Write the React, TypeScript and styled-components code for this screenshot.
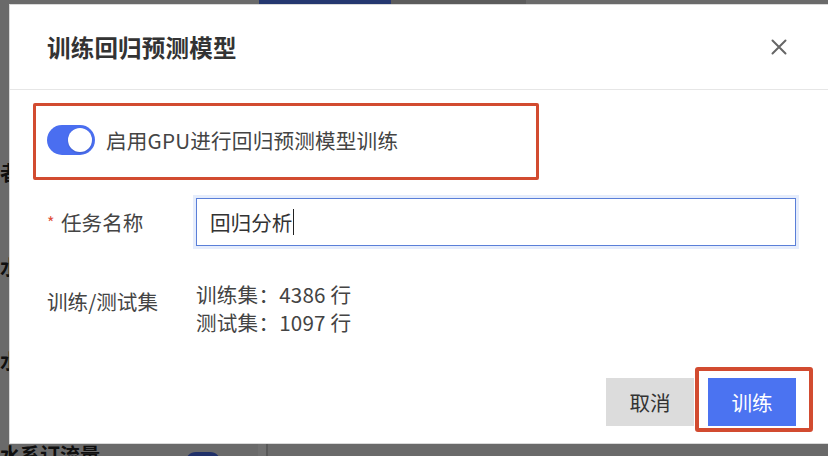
import React from 'react';
import styled, { createGlobalStyle } from 'styled-components';

const GlobalStyle = createGlobalStyle`
  html, body { margin: 0; padding: 0; width: 828px; height: 456px; overflow: hidden; }
  body { font-family: "Noto Sans CJK SC", "Noto Sans", sans-serif; }
  * { box-sizing: border-box; }
`;

const Screen = styled.div`
  position: relative;
  width: 828px;
  height: 456px;
  overflow: hidden;
  background: #f2f2f2;
`;

/* ---------- page behind the dialog ---------- */
const BgPage = styled.div`
  display: flex;
  flex-direction: column;
  width: 100%;
  height: 100%;
`;

const BgTabs = styled.div`
  display: flex;
  height: 4px;
  flex: none;
  padding-left: 259px;
`;

const BgTab = styled.div<{ $active?: boolean }>`
  width: ${(p) => (p.$active ? 132 : 135)}px;
  background: ${(p) => (p.$active ? '#5580ff' : '#d2d2d2')};
`;

const BgRows = styled.div`
  display: flex;
  flex-direction: column;
  padding-top: 119px;
`;

const BgRow = styled.div`
  display: flex;
  align-items: center;
  height: 94px;
  flex: none;
`;

const BgLabel = styled.span`
  width: 185px;
  flex: none;
  font-size: 20px;
  font-weight: 700;
  color: #222;
  white-space: nowrap;
  margin-top: 4px;
`;

const BgSwitch = styled.span`
  width: 36px;
  height: 22px;
  margin-top: 22px;
  border-radius: 11px;
  background: #4a6ef0;
  flex: none;
`;

const BgDivider = styled.span`
  width: 10px;
  height: 94px;
  margin-left: 37px;
  background: #ffffff;
  border-right: 2px solid #c8c8c8;
  flex: none;
`;

const BgValue = styled.span<{ $grow?: boolean }>`
  margin-left: 38px;
  margin-top: 24px;
  font-size: 18px;
  color: #222;
  flex: ${(p) => (p.$grow ? 1 : 'none')};
`;

const Mask = styled.div`
  position: absolute;
  inset: 0;
  background: rgba(0, 0, 0, 0.56);
`;

/* ---------- dialog ---------- */
const Dialog = styled.div`
  position: absolute;
  left: 9px;
  top: 4px;
  width: 826px;
  height: 440px;
  background: #fff;
  border: 1px solid #d9d9d9;
  display: flex;
  flex-direction: column;
`;

const Header = styled.div`
  height: 85px;
  flex: none;
  display: flex;
  align-items: center;
  justify-content: space-between;
  padding: 0 39px 0 37px;
  border-bottom: 1px solid #e6e6e6;
`;

const Title = styled.h2`
  margin: 0;
  font-size: 23.5px;
  font-weight: 700;
  color: #333;
  letter-spacing: 0.2px;
`;

const CloseButton = styled.button`
  width: 32px;
  height: 32px;
  padding: 0;
  border: none;
  background: transparent;
  display: flex;
  align-items: center;
  justify-content: center;
  cursor: pointer;
`;

const Body = styled.div`
  flex: 1;
  display: flex;
  flex-direction: column;
  padding: 0 38px 17px 37px;
`;

const SwitchRow = styled.div`
  position: relative;
  margin-top: 16px;
  height: 71px;
  display: flex;
  align-items: center;
  gap: 11px;
  padding-bottom: 4px;
`;

const Annotation = styled.div<{ $w: number }>`
  position: absolute;
  border: ${(p) => p.$w}px solid #d24b30;
  border-radius: 2px;
  pointer-events: none;
`;

const RowMark = styled(Annotation)`
  left: -14px;
  top: -3px;
  width: 506px;
  height: 77px;
`;

const Toggle = styled.span<{ $on: boolean }>`
  position: relative;
  width: 48px;
  height: 30px;
  border-radius: 15px;
  background: ${(p) => (p.$on ? '#4a6ef0' : '#c8c8c8')};
  flex: none;
  &::after {
    content: '';
    position: absolute;
    top: 3px;
    left: ${(p) => (p.$on ? 21 : 3)}px;
    width: 24px;
    height: 24px;
    border-radius: 50%;
    background: #fff;
    box-shadow: 0 1px 2px rgba(0, 0, 0, 0.15);
  }
`;

const Text = styled.span`
  font-size: 20.6px;
  color: #444;
  white-space: nowrap;
  letter-spacing: 0.2px;
`;

const FieldRow = styled.div`
  display: flex;
  align-items: center;
  margin-top: 21px;
`;

const InfoRow = styled.div`
  display: flex;
  align-items: flex-start;
  margin-top: 34px;
`;

const Label = styled.label<{ $pad?: number }>`
  width: 149px;
  flex: none;
  font-size: 20.6px;
  line-height: 28px;
  color: #444;
  padding-top: ${(p) => p.$pad ?? 0}px;
  display: flex;
  align-items: center;
`;

const Required = styled.span`
  color: #e0503c;
  font-size: 16px;
  margin-right: 4px;
  width: 10px;
`;

const TextField = styled.div`
  width: 600px;
  height: 48px;
  border: 1px solid #5a7fd8;
  box-shadow: 0 0 0 3px #e6edfc;
  padding: 0 13px;
  display: flex;
  align-items: center;
  font-size: 20.6px;
  color: #333;
`;

const Caret = styled.span`
  width: 1px;
  height: 26px;
  background: #222;
  margin-left: 1px;
`;

const Values = styled.div`
  display: flex;
  flex-direction: column;
  font-size: 20.6px;
  line-height: 28px;
  color: #444;
  letter-spacing: 0.2px;
`;

const Footer = styled.div`
  margin-top: auto;
  display: flex;
  justify-content: flex-end;
  gap: 14px;
`;

const Button = styled.button<{ $primary?: boolean }>`
  width: 88px;
  height: 48px;
  border: none;
  border-radius: 0;
  font-family: inherit;
  font-size: 20.6px;
  cursor: pointer;
  background: ${(p) => (p.$primary ? '#4b73f1' : '#dcdcdc')};
  color: ${(p) => (p.$primary ? '#fff' : '#333')};
`;

const ButtonSlot = styled.div`
  position: relative;
  display: flex;
`;

const ButtonMark = styled(Annotation)`
  left: -13px;
  top: -11px;
  right: -17px;
  bottom: -6px;
  border-radius: 3px;
`;

export default function App() {
  return (
    <>
      <GlobalStyle />
      <Screen>
        <BgPage>
          <BgTabs>
            <BgTab $active />
            <BgTab />
          </BgTabs>
          <BgRows>
            <BgRow>
              <BgLabel>者</BgLabel>
            </BgRow>
            <BgRow>
              <BgLabel>水</BgLabel>
            </BgRow>
            <BgRow>
              <BgLabel>水</BgLabel>
            </BgRow>
            <BgRow>
              <BgLabel>水系订流量</BgLabel>
              <BgSwitch />
              <BgDivider />
              <BgValue $grow>71.2400000</BgValue>
              <BgValue>39%</BgValue>
            </BgRow>
          </BgRows>
        </BgPage>
        <Mask />
        <Dialog role="dialog" aria-label="训练回归预测模型">
          <Header>
            <Title>训练回归预测模型</Title>
            <CloseButton aria-label="关闭">
              <svg width="16" height="16" viewBox="0 0 16 16">
                <path d="M1.5 1.5 L14.5 14.5 M14.5 1.5 L1.5 14.5" stroke="#666" strokeWidth="2" strokeLinecap="round" />
              </svg>
            </CloseButton>
          </Header>
          <Body>
            <SwitchRow>
              <Toggle $on role="switch" aria-checked="true" />
              <Text>启用GPU进行回归预测模型训练</Text>
              <RowMark $w={3} />
            </SwitchRow>
            <FieldRow>
              <Label>
                <Required>*</Required>任务名称
              </Label>
              <TextField>
                回归分析
                <Caret />
              </TextField>
            </FieldRow>
            <InfoRow>
              <Label $pad={7}>训练/测试集</Label>
              <Values>
                <span>训练集：4386 行</span>
                <span>测试集：1097 行</span>
              </Values>
            </InfoRow>
            <Footer>
              <Button>取消</Button>
              <ButtonSlot>
                <Button $primary>训练</Button>
                <ButtonMark $w={4} />
              </ButtonSlot>
            </Footer>
          </Body>
        </Dialog>
      </Screen>
    </>
  );
}
